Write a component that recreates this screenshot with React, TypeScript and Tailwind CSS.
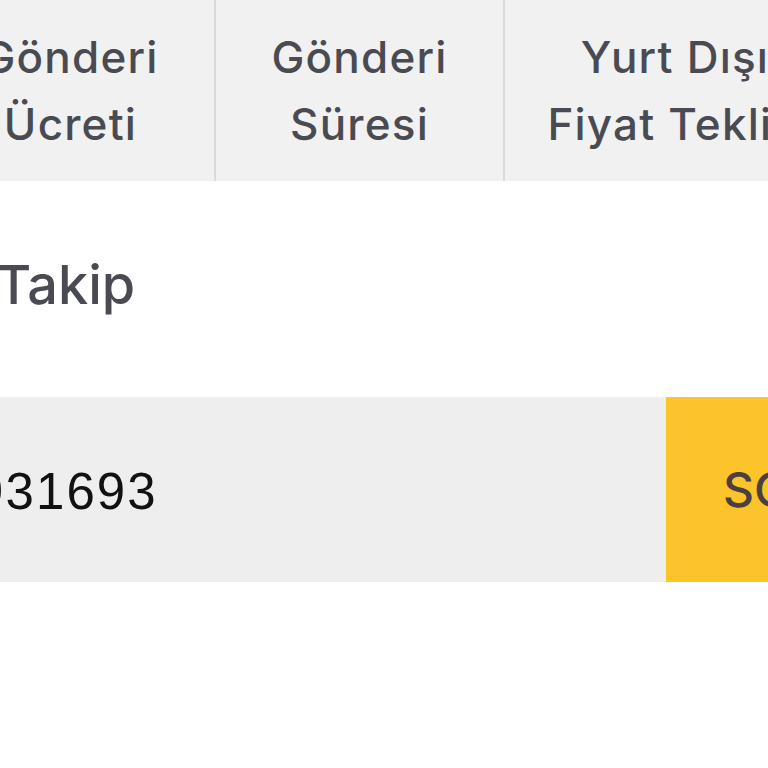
import React from "react";

export default function App() {
  return (
    <div className="w-[768px] h-[768px] overflow-hidden bg-white" style={{ fontFamily: "Inter, 'Noto Sans', sans-serif" }}>
      <div className="ml-[-73px] w-[1100px]">
        <div className="flex h-[181px] bg-[#f1f1f1]">
          <div className="w-[289px] flex items-center justify-center text-center text-[44px] tracking-[1.2px] leading-[67px] font-medium text-[#4a4b52] border-r-2 border-[#dadada]">
            <span>Gönderi<br />Ücreti</span>
          </div>
          <div className="w-[289px] flex items-center justify-center text-center text-[44px] tracking-[1.2px] leading-[67px] font-medium text-[#4a4b52] border-r-2 border-[#dadada]">
            <span>Gönderi<br />Süresi</span>
          </div>
          <div className="w-[340px] flex items-center justify-center text-center text-[44px] tracking-[1.2px] leading-[67px] font-medium text-[#4a4b52]">
            <span>Yurt Dışı<br />Fiyat Teklifi</span>
          </div>
        </div>
        <div className="pt-[77px] pl-[69px] text-[54px] leading-[54px] font-medium text-[#4a4b52]">Takip</div>
        <div className="mt-[85px] flex h-[185px]">
          <div className="w-[739px] bg-[#eeeeee] flex items-center pl-[48px] pt-[6px] text-[51px] tracking-[2.1px] text-[#111111]" style={{ fontFamily: "'Liberation Sans', Arial, sans-serif" }}>
            931693
          </div>
          <div className="w-[300px] bg-[#fcc42b] flex items-center pl-[57px] text-[48px] font-medium text-[#4a4040]">
            SORGULA
          </div>
        </div>
      </div>
    </div>
  );
}
